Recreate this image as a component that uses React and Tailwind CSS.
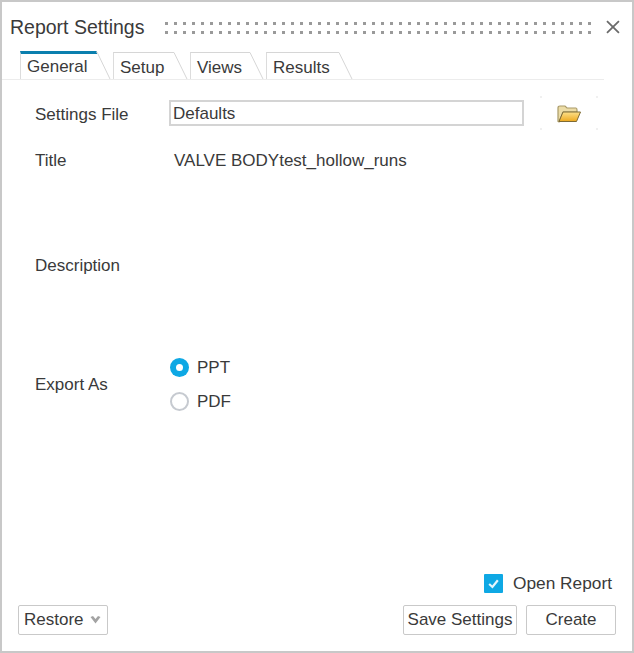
import React from 'react';

const tabs = [
  { name: 'General', width: 'w-[77px]', active: true },
  { name: 'Setup', width: 'w-[61px]' },
  { name: 'Views', width: 'w-[60px]' },
  { name: 'Results', width: 'w-[73px]' },
];

const Tab = ({ name, width, active }) => (
  <div className="flex items-end">
    <div
      className={`${width} border-l border-[#dcdcdc] pl-[6px] ${
        active
          ? 'h-[28px] border-t-[3px] border-t-[#0a7fae] pt-[3px]'
          : 'h-[27px] border-t border-t-[#d6d6d6] pt-[5px]'
      } text-[17px] leading-[20px] text-[#3a3a3a]`}
    >
      {name}
    </div>
    <svg width="15" height={active ? 28 : 27} className="block -ml-px shrink-0">
      <path d={active ? 'M0 1 L1 1 L14 28' : 'M0 .5 L1 .5 L14 27'} fill="none" stroke="#d6d6d6" />
    </svg>
  </div>
);

const FolderIcon = () => (
  <svg width="24" height="18" viewBox="0 0 24 18">
    <defs>
      <linearGradient id="folderFront" x1="0" y1="0" x2="0" y2="1">
        <stop offset="0" stopColor="#fde08a" />
        <stop offset="1" stopColor="#eda91f" />
      </linearGradient>
    </defs>
    <path d="M1 16.5 L1 3 Q1 1 3 1 L8 1 L10 3 L19 3 Q20 3 20 5 L20 7 L6 7 L2 17 Z" fill="#ecdca6" stroke="#a99a68" strokeWidth="1.2" />
    <path d="M6 7 L23.5 7 L19.5 16.5 L2 16.5 Z" fill="url(#folderFront)" stroke="#7d6a35" strokeWidth="1" />
  </svg>
);

const Corner = ({ className }) => <span className={`absolute size-[2px] bg-[#f0f0f0] ${className}`} />;

const Radio = ({ label, checked }) => (
  <div className="flex items-center gap-[8px] h-[34px]">
    {checked ? (
      <span className="flex items-center justify-center size-[19px] rounded-full bg-[#0ea8e4]">
        <span className="size-[7px] rounded-full bg-white" />
      </span>
    ) : (
      <span className="size-[19px] rounded-full border-2 border-[#c6cad0] bg-white" />
    )}
    <span className="pt-[1px]">{label}</span>
  </div>
);

const Button = ({ className, children }) => (
  <button className={`h-[30px] border border-[#c9c9c9] rounded-[2px] bg-white text-[17px] text-[#3a3a3a] ${className}`}>
    {children}
  </button>
);

export default function App() {
  return (
    <div className="w-[634px] h-[653px] flex flex-col bg-white border-2 border-[#c8c8c8] font-['Liberation_Sans',Arial,sans-serif] text-[17px] text-[#3a3a3a]">
      {/* Title bar */}
      <div className="h-[50px] flex items-start pl-[8px] pr-[11px] pt-[15px]">
        <span className="w-[153px] text-[19.5px] leading-[20px] whitespace-nowrap">Report Settings</span>
        <div className="w-[431px] h-[18px] mt-[2px] bg-[radial-gradient(circle,#9a9a9a_1.5px,transparent_1.8px)] bg-[length:9px_9px]" />
        <svg width="16" height="16" viewBox="0 0 16 16" className="ml-[14px] mt-[2px]">
          <path d="M2 2 L14 14 M14 2 L2 14" stroke="#6b6b6b" strokeWidth="1.8" fill="none" />
        </svg>
      </div>

      {/* Tabs */}
      <div className="h-[28px] flex items-end pl-[18px] mr-[28px] border-b border-[#ececec]">
        {tabs.map((tab, i) => (
          <div key={tab.name} className={i === 0 ? '' : 'ml-[2px]'}>
            <Tab {...tab} />
          </div>
        ))}
      </div>

      {/* Form */}
      <div className="flex-1 pl-[33px] pr-[28px]">
        <div className="flex items-center mt-[20px] h-[26px]">
          <span className="w-[134px] pt-[3px]">Settings File</span>
          <div className="w-[355px] h-[26px] border-2 border-[#d4d4d4] px-[2px] pt-[2px] leading-[20px]">Defaults</div>
          <div className="relative w-[58px] h-[34px] ml-[16px] flex items-center justify-center pt-[2px]">
            <Corner className="left-0 top-0" />
            <Corner className="right-0 top-0" />
            <Corner className="left-0 bottom-0" />
            <Corner className="right-0 bottom-0" />
            <FolderIcon />
          </div>
        </div>
        <div className="flex mt-[24px] h-[22px] leading-[22px]">
          <span className="w-[134px]">Title</span>
          <span className="pl-[5px]">VALVE BODYtest_hollow_runs</span>
        </div>
        <div className="mt-[83px] h-[22px] leading-[22px]">Description</div>
        <div className="flex items-center mt-[73px] h-[68px]">
          <span className="w-[135px] pt-[2px]">Export As</span>
          <div className="flex flex-col">
            <Radio label="PPT" checked />
            <Radio label="PDF" />
          </div>
        </div>
      </div>

      {/* Footer */}
      <div className="px-[16px] pb-[16px]">
        <div className="flex items-center justify-end gap-[10px] pr-[4px] mb-[8px]">
          <span className="flex items-center justify-center size-[19px] bg-[#0ea8e4] rounded-[1px]">
            <svg width="13" height="13" viewBox="0 0 12 12">
              <path d="M2 6.5 L5 9.2 L10 3" stroke="#e6f6fd" strokeWidth="2" fill="none" />
            </svg>
          </span>
          <span className="text-[17.3px] pt-[2px]">Open Report</span>
        </div>
        <div className="flex items-center">
          <Button className="w-[90px] flex items-center pl-[5px] gap-[6px]">
            Restore
            <svg width="11" height="8" viewBox="0 0 11 8">
              <path d="M0.5 1 L3 0 L5.5 3 L8 0 L10.5 1 L5.5 7.5 Z" fill="#a3a3a3" />
            </svg>
          </Button>
          <Button className="w-[114px] ml-auto whitespace-nowrap">Save Settings</Button>
          <Button className="w-[90px] ml-[9px]">Create</Button>
        </div>
      </div>
    </div>
  );
}
